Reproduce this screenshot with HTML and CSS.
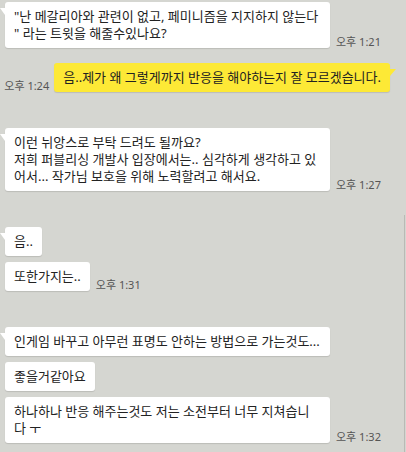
FILE: index.html
```html
<!DOCTYPE html>
<html lang="ko">
<head>
<meta charset="utf-8">
<link rel="stylesheet" href="styles.css">
</head>
<body>
<div class="chat">
  <div class="group">
    <div class="row">
      <div class="bubble bubble--tail bubble--wide">"난 메갈리아와 관련이 없고, 페미니즘을 지지하지 않는다<br>" 라는 트윗을 해줄수있나요?</div>
      <span class="time">오후 1:21</span>
    </div>
  </div>

  <div class="group group--near">
    <div class="row row--me">
      <span class="time">오후 1:24</span>
      <div class="bubble bubble--me">음..제가 왜 그렇게까지 반응을 해야하는지 잘 모르겠습니다.</div>
    </div>
  </div>

  <div class="group">
    <div class="row">
      <div class="bubble bubble--tail bubble--wide">이런 뉘앙스로 부탁 드려도 될까요?<br>저희 퍼블리싱 개발사 입장에서는.. 심각하게 생각하고 있<br>어서... 작가님 보호을 위해 노력할려고 해서요.</div>
      <span class="time">오후 1:27</span>
    </div>
  </div>

  <div class="group">
    <div class="row">
      <div class="bubble bubble--tail">음..</div>
    </div>
    <div class="row">
      <div class="bubble">또한가지는..</div>
      <span class="time">오후 1:31</span>
    </div>
  </div>

  <div class="group">
    <div class="row">
      <div class="bubble bubble--tail bubble--wide">인게임 바꾸고 아무런 표명도 안하는 방법으로 가는것도...</div>
    </div>
    <div class="row">
      <div class="bubble">좋을거같아요</div>
    </div>
    <div class="row">
      <div class="bubble bubble--wide">하나하나 반응 해주는것도 저는 소전부터 너무 지쳐습니<br>다 ㅜ</div>
      <span class="time">오후 1:32</span>
    </div>
  </div>
</div>
<div class="edge"></div>
</body>
</html>
```

FILE: styles.css
```css
html, body {
  margin: 0;
  padding: 0;
}

body {
  width: 406px;
  height: 452px;
  background: #d5d6d1;
  font-family: "Noto Sans", "Noto Sans CJK KR", sans-serif;
  color: #222;
  overflow: hidden;
  position: relative;
}

.chat {
  display: flex;
  flex-direction: column;
  padding: 2px 16px 0 5px;
}

.group {
  display: flex;
  flex-direction: column;
  gap: 6px;
}

.group + .group {
  margin-top: 36px;
}

.group + .group--near {
  margin-top: 15px;
}

.row {
  display: flex;
  align-items: flex-end;
  gap: 6px;
}

.row--me {
  justify-content: flex-end;
  gap: 5px;
}

.bubble {
  position: relative;
  background: #fff;
  border-radius: 3px;
  padding: 6px 9px;
  font-size: 13px;
  line-height: 17px;
  white-space: nowrap;
  box-shadow: 0 1px 1px rgba(0, 0, 0, 0.12);
}

.bubble--wide {
  width: 307px;
}

.bubble--tail::before {
  content: "";
  position: absolute;
  left: -5px;
  top: 6px;
  border-top: 7px solid #fff;
  border-left: 5px solid transparent;
}

.bubble--me {
  background: #fde936;
}

.bubble--me::after {
  content: "";
  position: absolute;
  right: -6px;
  top: 6px;
  border-top: 7px solid #fde936;
  border-right: 6px solid transparent;
}

.time {
  font-size: 11px;
  line-height: 11px;
  color: #555;
  white-space: nowrap;
  padding-bottom: 1px;
}

.edge {
  position: absolute;
  right: 1px;
  top: 215px;
  bottom: 0;
  width: 1px;
  background: #b9bab5;
}
```
